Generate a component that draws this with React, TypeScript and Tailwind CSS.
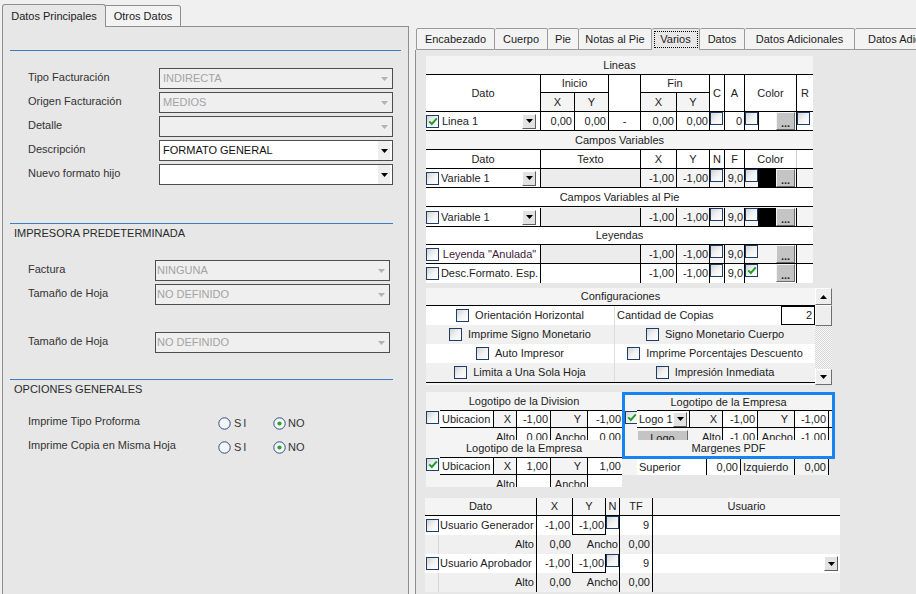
import React from "react";

function Tri({ up = false, c = "#000" }: { up?: boolean; c?: string }) {
  return (
    <svg width="7" height="4" viewBox="0 0 7 4" className="shrink-0">
      <path d={up ? "M0 4H7L3.5 0Z" : "M0 0H7L3.5 4Z"} fill={c} />
    </svg>
  );
}

function Cb({ on = false }: { on?: boolean }) {
  return (
    <div className="w-[13px] h-[13px] shrink-0 border border-[#1e3d66] bg-linear-to-br from-[#d2d2d2] via-[#f2f2f2] to-white flex items-center justify-center">
      {on && (
        <svg width="10" height="9" viewBox="0 0 10 9">
          <path d="M1.2 4.4L3.8 7L8.8 1.4" stroke="#1f9e2c" strokeWidth="2" fill="none" />
        </svg>
      )}
    </div>
  );
}

function Dots() {
  return (
    <div className="w-[19px] h-[18px] shrink-0 bg-[#c4c4c4] border border-t-[#f4f4f4] border-l-[#f4f4f4] border-r-[#6a6a6a] border-b-[#6a6a6a] flex items-end justify-center pb-[3px] text-[11px] leading-[6px] font-bold text-[#222]">
      ...
    </div>
  );
}

function Dd() {
  return (
    <div className="w-[14px] h-[15px] shrink-0 bg-[#e2e2e2] border border-t-white border-l-white border-r-[#5e5e5e] border-b-[#5e5e5e] flex items-center justify-center">
      <Tri />
    </div>
  );
}

function Radio({ on = false }: { on?: boolean }) {
  return (
    <svg width="13" height="13" viewBox="0 0 13 13" className="shrink-0">
      <circle cx="6.5" cy="6.5" r="5.7" fill="#f3f5f8" stroke="#2f4f7f" strokeWidth="1" />
      {on && <circle cx="6.5" cy="6.5" r="2.1" fill="#2aa52a" />}
    </svg>
  );
}

function Sel({ text, dis = false, className = "", pl = "pl-[3px]" }: { text: string; dis?: boolean; className?: string; pl?: string }) {
  return (
    <div className={`h-[21px] border border-[#4d4d4d] flex items-center shrink-0 ${dis ? "bg-[#efefef] text-[#a3a3a3]" : "bg-white text-[#111]"} ${className}`}>
      <span className={`flex-1 whitespace-nowrap ${pl}`}>{text}</span>
      {dis ? (
        <div className="mr-[4px] flex items-center">
          <Tri c="#b3b3b3" />
        </div>
      ) : (
        <div className="w-[12px] mr-[2px] h-[19px] bg-[#efefef] flex items-center justify-center">
          <Tri />
        </div>
      )}
    </div>
  );
}

function FormRow({ label, children, lw = "w-[156px]" }: { label: string; children: React.ReactNode; lw?: string }) {
  return (
    <div className="h-[21px] flex items-center">
      <div className={`${lw} shrink-0 pl-[25px] pb-[3px] text-[#333] whitespace-nowrap`}>{label}</div>
      {children}
    </div>
  );
}

function RadioRow({ label }: { label: string }) {
  return (
    <div className="h-[16px] flex items-center">
      <div className="w-[215px] shrink-0 pl-[25px] pb-[3px] text-[#333] whitespace-nowrap">{label}</div>
      <Radio />
      <span className="ml-[3px] w-[39px] tracking-[2px] text-[#333]">SI</span>
      <Radio on />
      <span className="ml-[2px] text-[#333]">NO</span>
    </div>
  );
}

function LeftPanel() {
  return (
    <div className="w-[410px] shrink-0 flex flex-col pt-[4px] pl-[2px] pr-[1px]">
      <div className="h-[23px] flex items-end shrink-0">
        <div className="w-[104px] h-[23px] border border-b-0 border-[#8e8e8e] rounded-t-[3px] bg-[#e7e7e7] flex items-center justify-center text-[#222]">
          Datos Principales
        </div>
        <div className="w-[75px] h-[22px] border border-l-0 border-[#8e8e8e] rounded-tr-[3px] bg-[#f3f3f3] flex items-center justify-center text-[#222]">
          Otros Datos
        </div>
        <div className="flex-1 h-full border-b border-[#8e8e8e]" />
      </div>
      <div className="flex-1 bg-[#e7e7e7] border-l border-r border-[#8e8e8e] flex flex-col">
        <div className="mt-[23px] ml-[7px] w-[391px] border-t border-[#3d7dc3]" />
        <div className="mt-[17px] flex flex-col gap-[3px]">
          <FormRow label="Tipo Facturación">
            <Sel text="INDIRECTA" dis className="w-[234px]" />
          </FormRow>
          <FormRow label="Origen Facturación">
            <Sel text="MEDIOS" dis className="w-[234px]" />
          </FormRow>
          <FormRow label="Detalle">
            <Sel text="" dis className="w-[234px]" />
          </FormRow>
          <FormRow label="Descripción">
            <Sel text="FORMATO GENERAL" className="w-[234px]" />
          </FormRow>
          <FormRow label="Nuevo formato hijo">
            <Sel text="" className="w-[234px]" />
          </FormRow>
        </div>
        <div className="mt-[38px] ml-[7px] w-[383px] border-t border-[#3d7dc3]" />
        <div className="mt-[2px] h-[14px] ml-[11px] flex items-center text-[#2a2a2a]">IMPRESORA PREDETERMINADA</div>
        <div className="mt-[20px] flex flex-col gap-[3px]">
          <FormRow label="Factura" lw="w-[152px]">
            <Sel text="NINGUNA" dis pl="pl-[1px]" className="w-[235px]" />
          </FormRow>
          <FormRow label="Tamaño de Hoja" lw="w-[152px]">
            <Sel text="NO DEFINIDO" dis pl="pl-[1px]" className="w-[235px]" />
          </FormRow>
        </div>
        <div className="mt-[27px]">
          <FormRow label="Tamaño de Hoja" lw="w-[152px]">
            <Sel text="NO DEFINIDO" dis pl="pl-[1px]" className="w-[235px]" />
          </FormRow>
        </div>
        <div className="mt-[26px] ml-[7px] w-[383px] border-t border-[#3d7dc3]" />
        <div className="mt-[2px] h-[14px] ml-[11px] flex items-center text-[#2a2a2a]">OPCIONES GENERALES</div>
        <div className="mt-[19px] flex flex-col gap-[8px]">
          <RadioRow label="Imprime Tipo Proforma" />
          <RadioRow label="Imprime Copia en Misma Hoja" />
        </div>
      </div>
    </div>
  );
}

const cc = "flex items-center justify-center";
const cr = "flex items-center justify-end";

function VarRow({ label, color = true, texto = "bg-[#ececec]", row = "bg-[#f4f4f4]", leg = false, colorOn = false, dd = false }: { label: string; color?: boolean; texto?: string; row?: string; leg?: boolean; colorOn?: boolean; dd?: boolean }) {
  return (
    <div className={`h-[19px] flex border-b border-black ${row}`}>
      <div className="w-[115px] shrink-0 border-r border-black flex items-center bg-white">
        <Cb />
        {dd ? (
          <>
            <span className="ml-[2px] flex-1 whitespace-nowrap">{label}</span>
            <Dd />
            <div className="w-[4px]" />
          </>
        ) : (
          <span className={`flex-1 text-center whitespace-nowrap ${leg ? "text-[#43183a]" : ""}`}>{label}</span>
        )}
      </div>
      <div className={`w-[100px] shrink-0 border-r border-black ${texto}`} />
      <div className={`w-[36px] shrink-0 border-r border-black ${cr} pr-[2px]`}>-1,00</div>
      <div className={`w-[33px] shrink-0 border-r border-black ${cr} pr-[1px]`}>-1,00</div>
      <div className="w-[15px] shrink-0 border-r border-black flex items-start"><Cb /></div>
      <div className={`w-[20px] shrink-0 border-r border-black ${cr} pr-[1px]`}>9,0</div>
      <div className="w-[52px] shrink-0 border-r border-black flex items-start">
        <Cb on={colorOn} />
        <div className={`w-[18px] h-full shrink-0 ${color ? "bg-black" : ""}`} />
        <Dots />
      </div>
      <div className="flex-1" />
    </div>
  );
}

function Title({ text, h = "h-[19px]", bg = "bg-[#f4f4f4]" }: { text: string; h?: string; bg?: string }) {
  return <div className={`${h} ${bg} border-b border-black ${cc}`}>{text}</div>;
}

function UpperTable() {
  return (
    <div className="mt-[6px] ml-[10px] w-[387px] bg-[#f4f4f4] flex flex-col shrink-0">
      <div className={`h-[18px] ${cc}`}>Lineas</div>
      <div className="h-[38px] flex border-y border-black">
        <div className={`w-[115px] shrink-0 bg-white border-r border-black ${cc}`}>Dato</div>
        <div className="w-[68px] shrink-0 border-r border-black flex flex-col">
          <div className={`h-[18px] bg-white border-b border-black ${cc}`}>Inicio</div>
          <div className="flex-1 flex">
            <div className={`w-[34px] border-r border-black ${cc}`}>X</div>
            <div className={`flex-1 ${cc}`}>Y</div>
          </div>
        </div>
        <div className="w-[32px] shrink-0 bg-white border-r border-black" />
        <div className="w-[69px] shrink-0 border-r border-black flex flex-col">
          <div className={`h-[18px] bg-white border-b border-black ${cc}`}>Fin</div>
          <div className="flex-1 flex">
            <div className={`w-[36px] border-r border-black ${cc}`}>X</div>
            <div className={`flex-1 ${cc}`}>Y</div>
          </div>
        </div>
        <div className={`w-[15px] shrink-0 bg-white border-r border-black ${cc}`}>C</div>
        <div className={`w-[20px] shrink-0 bg-white border-r border-black ${cc}`}>A</div>
        <div className={`w-[52px] shrink-0 bg-white border-r border-black ${cc}`}>Color</div>
        <div className={`flex-1 bg-white ${cc}`}>R</div>
      </div>
      <div className="h-[19px] flex border-b border-black bg-white">
        <div className="w-[115px] shrink-0 border-r border-black flex items-center">
          <Cb on />
          <span className="ml-[3px] flex-1 whitespace-nowrap">Linea 1</span>
          <Dd />
          <div className="w-[4px]" />
        </div>
        <div className={`w-[34px] shrink-0 border-r border-black ${cr} pr-[2px]`}>0,00</div>
        <div className={`w-[34px] shrink-0 border-r border-black ${cr} pr-[2px]`}>0,00</div>
        <div className={`w-[32px] shrink-0 border-r border-black ${cc}`}>-</div>
        <div className={`w-[36px] shrink-0 border-r border-black ${cr} pr-[2px]`}>0,00</div>
        <div className={`w-[33px] shrink-0 border-r border-black ${cr} pr-[1px]`}>0,00</div>
        <div className="w-[15px] shrink-0 border-r border-black flex items-start"><Cb /></div>
        <div className={`w-[20px] shrink-0 border-r border-black ${cr} pr-[2px]`}>0</div>
        <div className="w-[52px] shrink-0 border-r border-black flex items-start">
          <Cb />
          <div className="w-[18px] h-full shrink-0 border-l border-black bg-white" />
          <Dots />
        </div>
        <div className="flex-1 flex items-start"><Cb /></div>
      </div>
      <Title text="Campos Variables" />
      <div className="h-[19px] flex border-b border-black bg-white">
        <div className={`w-[115px] shrink-0 border-r border-black ${cc}`}>Dato</div>
        <div className={`w-[100px] shrink-0 border-r border-black ${cc}`}>Texto</div>
        <div className={`w-[36px] shrink-0 border-r border-black ${cc}`}>X</div>
        <div className={`w-[33px] shrink-0 border-r border-black ${cc}`}>Y</div>
        <div className={`w-[15px] shrink-0 border-r border-black ${cc}`}>N</div>
        <div className={`w-[20px] shrink-0 border-r border-black ${cc}`}>F</div>
        <div className={`w-[52px] shrink-0 border-r border-[#cfcfcf] ${cc}`}>Color</div>
        <div className="flex-1" />
      </div>
      <VarRow label="Variable 1" dd />
      <Title text="Campos Variables al Pie" bg="bg-white" />
      <div className="h-[1px]" />
      <VarRow label="Variable 1" dd />
      <Title text="Leyendas" h="h-[18px]" bg="bg-white" />
      <VarRow label={'Leyenda "Anulada"'} leg color={false} />
      <div className="h-[19px] flex bg-white">
        <div className="w-[115px] shrink-0 border-r border-black flex items-center bg-white">
          <Cb />
          <span className="flex-1 text-center whitespace-nowrap">Desc.Formato. Esp.</span>
        </div>
        <div className="w-[100px] shrink-0 border-r border-black bg-white" />
        <div className={`w-[36px] shrink-0 border-r border-black ${cr} pr-[2px]`}>-1,00</div>
        <div className={`w-[33px] shrink-0 border-r border-black ${cr} pr-[1px]`}>-1,00</div>
        <div className="w-[15px] shrink-0 border-r border-black flex items-start"><Cb /></div>
        <div className={`w-[20px] shrink-0 border-r border-black ${cr} pr-[1px]`}>9,0</div>
        <div className="w-[52px] shrink-0 border-r border-black flex items-start">
          <Cb on />
          <div className="w-[18px] h-full shrink-0" />
          <Dots />
        </div>
        <div className="flex-1" />
      </div>
    </div>
  );
}

function CfgItem({ label }: { label: string }) {
  return (
    <div className="flex-1 flex items-center justify-center gap-[6px] whitespace-nowrap">
      <Cb />
      <span>{label}</span>
    </div>
  );
}

function SBtn({ h, children }: { h: string; children?: React.ReactNode }) {
  return (
    <div className={`${h} shrink-0 bg-[#eeeeee] border border-t-white border-l-white border-r-[#6e6e6e] border-b-[#6e6e6e] ${cc}`}>
      {children}
    </div>
  );
}

function Config() {
  return (
    <div className="mt-[5px] ml-[10px] flex h-[97px] shrink-0">
      <div className="w-[389px] shrink-0 bg-[#f4f4f4] flex flex-col">
        <div className={`h-[18px] border-b border-black ${cc}`}>Configuraciones</div>
        <div className="h-[19px] flex bg-white">
          <div className="w-[189px] shrink-0 border-r border-[#dcdcdc] flex"><CfgItem label="Orientación Horizontal" /></div>
          <div className="flex-1 flex items-center">
            <span className="pl-[2px] flex-1 whitespace-nowrap">Cantidad de Copias</span>
            <div className={`w-[34px] h-full border border-black bg-white ${cr} pr-[2px]`}>2</div>
          </div>
        </div>
        <div className="h-[19px] flex bg-[#f0f0f0]">
          <div className="w-[189px] shrink-0 border-r border-[#dcdcdc] flex"><CfgItem label="Imprime Signo Monetario" /></div>
          <div className="flex-1 flex"><CfgItem label="Signo Monetario Cuerpo" /></div>
        </div>
        <div className="h-[19px] flex bg-white">
          <div className="w-[189px] shrink-0 border-r border-[#dcdcdc] flex"><CfgItem label="Auto Impresor" /></div>
          <div className="flex-1 flex"><CfgItem label="Imprime Porcentajes Descuento" /></div>
        </div>
        <div className="h-[20px] flex bg-[#f0f0f0] border-b border-black">
          <div className="w-[189px] shrink-0 border-r border-[#dcdcdc] flex"><CfgItem label="Limita a Una Sola Hoja" /></div>
          <div className="flex-1 flex"><CfgItem label="Impresión Inmediata" /></div>
        </div>
      </div>
      <div className="w-[17px] shrink-0 flex flex-col bg-[image:repeating-conic-gradient(#d9d9d9_0_25%,#f6f6f6_0_50%)] bg-[length:2px_2px]">
        <SBtn h="h-[17px]"><Tri up /></SBtn>
        <SBtn h="h-[21px]" />
        <div className="flex-1" />
        <SBtn h="h-[16px]"><Tri /></SBtn>
      </div>
    </div>
  );
}

function LogoBlockL({ title, on, x, y, a, b, th = "h-[18px]", bh = "h-[48px]" }: { title: string; on?: boolean; x: string; y: string; a: string; b: string; th?: string; bh?: string }) {
  return (
    <div className={`${bh} shrink-0 overflow-hidden bg-[#f4f4f4] flex flex-col`}>
      <div className={`${th} shrink-0 ${cc}`}>{title}</div>
      <div className="h-[18px] shrink-0 flex">
        <div className="w-[14px] shrink-0 pt-[1px]"><Cb on={on} /></div>
        <div className="flex-1 flex border-y border-black">
          <div className="w-[54px] shrink-0 bg-white border-r border-black flex items-center pl-[2px]">Ubicacion</div>
          <div className={`w-[23px] shrink-0 border-r border-black ${cr} pr-[5px]`}>X</div>
          <div className={`w-[34px] shrink-0 bg-white border-r border-black ${cr} pr-[2px]`}>{x}</div>
          <div className={`w-[37px] shrink-0 border-r border-black ${cr} pr-[6px]`}>Y</div>
          <div className={`flex-1 bg-white ${cr} pr-[1px]`}>{y}</div>
        </div>
      </div>
      <div className="h-[18px] shrink-0 flex">
        <div className="w-[68px] shrink-0" />
        <div className={`w-[23px] shrink-0 border-r border-black ${cr} pr-[1px]`}>Alto</div>
        <div className={`w-[34px] shrink-0 bg-white border-r border-black ${cr} pr-[2px]`}>{a}</div>
        <div className={`w-[37px] shrink-0 border-r border-black ${cr} pr-[1px]`}>Ancho</div>
        <div className={`flex-1 bg-white ${cr} pr-[1px]`}>{b}</div>
      </div>
    </div>
  );
}

function Logos() {
  return (
    <div className="mt-[7px] ml-[10px] flex h-[95px] shrink-0">
      <div className="w-[196px] shrink-0 flex flex-col">
        <LogoBlockL title="Logotipo de la Division" x="-1,00" y="-1,00" a="0,00" b="0,00" />
        <LogoBlockL title="Logotipo de la Empresa" on x="1,00" y="1,00" a="" b="" th="h-[17px]" bh="h-[47px]" />
      </div>
      <div className="w-[213px] shrink-0 flex flex-col">
        <div className="h-[67px] shrink-0 border-[3px] border-[#1683f2] bg-[#f4f4f4] flex flex-col overflow-hidden">
          <div className={`h-[15px] shrink-0 ${cc}`}>Logotipo de la Empresa</div>
          <div className="h-[18px] shrink-0 flex">
            <div className="w-[12px] shrink-0 pt-[1px]"><Cb on /></div>
            <div className="flex-1 flex border-y border-black">
              <div className="w-[53px] shrink-0 bg-white border-r border-black flex items-center pl-[2px]">
                <span className="flex-1">Logo 1</span>
                <Dd />
                <div className="w-[2px]" />
              </div>
              <div className={`w-[33px] shrink-0 border-r border-black ${cr} pr-[5px]`}>X</div>
              <div className={`w-[35px] shrink-0 bg-white border-r border-black ${cr} pr-[2px]`}>-1,00</div>
              <div className={`w-[37px] shrink-0 border-r border-black ${cr} pr-[6px]`}>Y</div>
              <div className={`w-[34px] shrink-0 bg-white border-r border-black ${cr} pr-[2px]`}>-1,00</div>
              <div className="flex-1" />
            </div>
          </div>
          <div className="h-[12px] shrink-0 overflow-hidden">
            <div className="h-[18px] flex">
              <div className="w-[12px] shrink-0" />
              <div className={`w-[51px] shrink-0 mt-[2px] bg-[#c4c4c4] border border-t-[#f4f4f4] border-l-[#f4f4f4] border-r-[#6a6a6a] border-b-[#6a6a6a] ${cc}`}>Logo</div>
              <div className="w-[2px] shrink-0" />
              <div className={`w-[33px] shrink-0 border-r border-black ${cr} pr-[1px]`}>Alto</div>
              <div className={`w-[35px] shrink-0 bg-white border-r border-black ${cr} pr-[2px]`}>-1,00</div>
              <div className={`w-[37px] shrink-0 border-r border-black ${cr} pr-[1px]`}>Ancho</div>
              <div className={`w-[34px] shrink-0 bg-white border-r border-black ${cr} pr-[2px]`}>-1,00</div>
            </div>
          </div>
          <div className={`h-[16px] shrink-0 ${cc}`}>Margenes PDF</div>
        </div>
        <div className="h-[16px] w-[207px] shrink-0 flex bg-[#f4f4f4] overflow-hidden">
          <div className="w-[15px] shrink-0" />
          <div className="w-[53px] shrink-0 bg-white flex items-center pl-[2px]">Superior</div>
          <div className="w-[17px] shrink-0 bg-white border-r border-black" />
          <div className={`w-[34px] shrink-0 bg-white border-r border-black ${cr} pr-[2px]`}>0,00</div>
          <div className="w-[54px] shrink-0 border-r border-black flex items-center pl-[2px]">Izquierdo</div>
          <div className={`w-[34px] shrink-0 border-r border-black ${cr} pr-[2px]`}>0,00</div>
        </div>
      </div>
    </div>
  );
}

function UserRow({ label, dd = false }: { label: string; dd?: boolean }) {
  return (
    <div className="h-[19px] flex bg-white">
      <div className="w-[14px] shrink-0 flex items-center pl-[1px]"><Cb /></div>
      <div className="w-[98px] shrink-0 border-r border-black flex items-center pl-[1px] whitespace-nowrap">{label}</div>
      <div className={`w-[36px] shrink-0 border-r border-black ${cr} pr-[2px]`}>-1,00</div>
      <div className={`w-[33px] shrink-0 border-r border-b border-black ${cr} pr-[1px]`}>-1,00</div>
      <div className="w-[14px] shrink-0 border-r border-black flex items-start"><Cb /></div>
      <div className={`w-[33px] shrink-0 border-r border-black ${cr} pr-[3px]`}>9</div>
      <div className={`flex-1 bg-white ${cr} pr-[2px]`}>{dd && <Dd />}</div>
    </div>
  );
}

function AltoRow() {
  return (
    <div className="h-[19px] flex bg-[#f0f0f0]">
      <div className="w-[14px] shrink-0 border-r border-[#d8d8d8]" />
      <div className={`w-[98px] shrink-0 border-r border-black ${cr} pr-[2px]`}>Alto</div>
      <div className={`w-[36px] shrink-0 ${cr} pr-[2px]`}>0,00</div>
      <div className={`w-[47px] shrink-0 border-r border-black ${cr} pr-[1px]`}>Ancho</div>
      <div className={`w-[33px] shrink-0 border-r border-black ${cr} pr-[2px]`}>0,00</div>
      <div className="flex-1" />
    </div>
  );
}

function Bottom() {
  return (
    <div className="mt-[11px] ml-[9px] w-[415px] flex flex-col shrink-0">
      <div className="h-[18px] flex bg-[#f4f4f4] border-b border-black">
        <div className={`w-[112px] shrink-0 border-r border-black ${cc}`}>Dato</div>
        <div className={`w-[36px] shrink-0 border-r border-black ${cc}`}>X</div>
        <div className={`w-[33px] shrink-0 border-r border-black ${cc}`}>Y</div>
        <div className={`w-[14px] shrink-0 border-r border-black ${cc}`}>N</div>
        <div className={`w-[33px] shrink-0 border-r border-black ${cc}`}>TF</div>
        <div className={`flex-1 ${cc}`}>Usuario</div>
      </div>
      <UserRow label="Usuario Generador" />
      <AltoRow />
      <UserRow label="Usuario Aprobador" dd />
      <AltoRow />
    </div>
  );
}

function RightPanel() {
  const tab = "h-[22px] shrink-0 border-t border-r border-b border-[#9a9a9a] rounded-t-[2px] bg-[#f3f3f3] flex items-center justify-center whitespace-nowrap";
  return (
    <div className="w-[506px] shrink-0 flex flex-col pt-[28px] pl-[5px] overflow-hidden">
      <div className="h-[22px] flex items-end shrink-0 ml-[1px] overflow-hidden">
        <div className={`${tab} w-[79px] border-l`}>Encabezado</div>
        <div className={`${tab} w-[53px]`}>Cuerpo</div>
        <div className={`${tab} w-[31px]`}>Pie</div>
        <div className={`${tab} w-[73px]`}>Notas al Pie</div>
        <div className="h-[22px] w-[48px] shrink-0 border-t border-r border-[#9a9a9a] rounded-t-[2px] bg-[#e7e7e7] flex items-center justify-center">
          <div className="w-[44px] h-[17px] border border-dotted border-black flex items-center justify-center">Varios</div>
        </div>
        <div className={`${tab} w-[45px]`}>Datos</div>
        <div className={`${tab} w-[110px]`}>Datos Adicionales</div>
        <div className={`${tab} w-[80px] justify-start pl-[13px]`}>Datos Adicionales</div>
      </div>
      <div className="flex-1 bg-[#e7e7e7] border-l border-[#8e8e8e] flex flex-col">
        <UpperTable />
        <Config />
        <Logos />
        <Bottom />
      </div>
    </div>
  );
}

export default function App() {
  return (
    <div className="w-[916px] h-[594px] overflow-hidden bg-[#f0f0f0] flex font-['Liberation_Sans',Arial,sans-serif] text-[11px] text-[#1c1c1c] leading-none">
      <LeftPanel />
      <RightPanel />
    </div>
  );
}
